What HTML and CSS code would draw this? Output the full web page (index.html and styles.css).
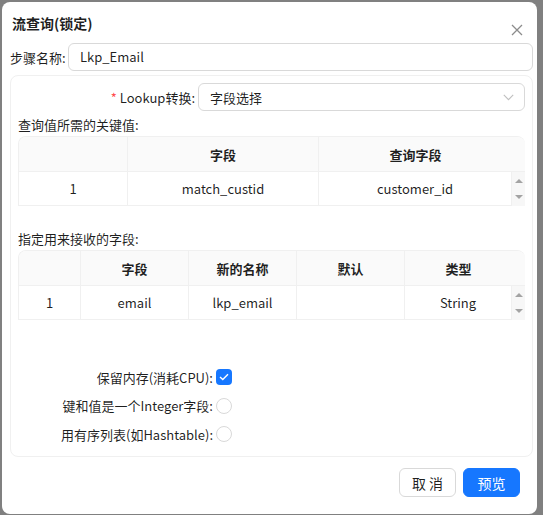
FILE: index.html
```html
<!DOCTYPE html>
<html lang="zh-CN">
<head>
<meta charset="utf-8">
<title>流查询(锁定)</title>
<link rel="stylesheet" href="styles.css">
</head>
<body>
<div class="modal">
  <div class="header">
    <div class="title">流查询(锁定)</div>
    <button class="close" aria-label="close">
      <svg width="12" height="12" viewBox="0 0 12 12"><path d="M1 1L11 11M11 1L1 11" stroke="#8c8c8c" stroke-width="1.3" fill="none"/></svg>
    </button>
  </div>
  <div class="name-row">
    <label class="name-label">步骤名称:</label>
    <div class="input">Lkp_Email</div>
  </div>
  <div class="card">
    <div class="form-row">
      <label class="lbl"><span class="req">*</span> Lookup转换:</label>
      <div class="select">
        <span>字段选择</span>
        <svg class="chev" width="11" height="7" viewBox="0 0 11 7"><path d="M0.8 0.8L5.5 5.6L10.2 0.8" stroke="#bfbfbf" stroke-width="1.1" fill="none"/></svg>
      </div>
    </div>
    <div class="section">查询值所需的关键值:</div>
    <div class="table t1">
      <div class="th"></div>
      <div class="th">字段</div>
      <div class="th last">查询字段</div>
      <div class="th scroll-h"></div>
      <div class="td">1</div>
      <div class="td">match_custid</div>
      <div class="td">customer_id</div>
      <div class="sb"><span class="up"></span><span class="down"></span></div>
    </div>
    <div class="section s2">指定用来接收的字段:</div>
    <div class="table t2">
      <div class="th"></div>
      <div class="th">字段</div>
      <div class="th">新的名称</div>
      <div class="th">默认</div>
      <div class="th last">类型</div>
      <div class="th scroll-h"></div>
      <div class="td">1</div>
      <div class="td">email</div>
      <div class="td">lkp_email</div>
      <div class="td"></div>
      <div class="td">String</div>
      <div class="sb"><span class="up"></span><span class="down"></span></div>
    </div>
    <div class="checks">
      <div class="ck-row">
        <span class="ck-label">保留内存(消耗CPU):</span>
        <span class="box checked"><svg width="10" height="8" viewBox="0 0 10 8"><path d="M1 4L3.8 6.6L9 1.2" stroke="#fff" stroke-width="1.4" fill="none"/></svg></span>
      </div>
      <div class="ck-row">
        <span class="ck-label">键和值是一个Integer字段:</span>
        <span class="box round"></span>
      </div>
      <div class="ck-row">
        <span class="ck-label">用有序列表(如Hashtable):</span>
        <span class="box round"></span>
      </div>
    </div>
  </div>
  <div class="footer">
    <button class="btn">取 消</button>
    <button class="btn primary">预览</button>
  </div>
</div>
</body>
</html>
```

FILE: styles.css
```css
* { box-sizing: border-box; }
html, body { margin: 0; }
body {
  width: 543px;
  height: 515px;
  background: #808080;
  padding: 2px 0 0 2px;
  font-family: "Noto Sans CJK SC", "Noto Sans", sans-serif;
  font-size: 13px;
  color: rgba(0, 0, 0, 0.88);
  overflow: hidden;
}
.modal {
  width: 535px;
  height: 512px;
  background: #fff;
  border-radius: 8px;
  padding: 0 4px 0 8px;
  display: flex;
  flex-direction: column;
}
.header {
  height: 41px;
  display: flex;
  justify-content: space-between;
  align-items: flex-start;
}
.title {
  margin-top: 10px;
  margin-left: 2px;
  font-size: 14px;
  font-weight: 700;
  line-height: 22px;
}
.close {
  margin-top: 21px;
  margin-right: 8px;
  width: 16px;
  height: 14px;
  padding: 0;
  border: 0;
  background: none;
  display: flex;
  align-items: center;
  justify-content: center;
}
.name-row {
  display: flex;
  align-items: center;
  height: 28px;
}
.name-label {
  width: 58px;
  padding-left: 0;
  white-space: nowrap;
}
.input {
  flex: 1;
  height: 28px;
  border: 1px solid #d9d9d9;
  border-radius: 6px;
  padding: 0 11px;
  line-height: 26px;
}
.card {
  margin-top: 4px;
  height: 382px;
  border: 1px solid #f0f0f0;
  border-radius: 8px;
  padding: 7px;
}
.form-row {
  display: flex;
  align-items: center;
  height: 28px;
}
.lbl {
  width: 180px;
  padding-right: 3px;
  text-align: right;
  white-space: nowrap;
}
.req { color: #ff4d4f; }
.select {
  flex: 1;
  height: 28px;
  border: 1px solid #d9d9d9;
  border-radius: 6px;
  padding: 0 10px 0 11px;
  display: flex;
  align-items: center;
  justify-content: space-between;
}
.section {
  margin-top: 3px;
  line-height: 22px;
}
.s2 { margin-top: 22px; }
.table {
  display: grid;
  border-top: 1px solid #f0f0f0;
  border-left: 1px solid #f0f0f0;
  border-radius: 8px 8px 0 0;
  overflow: hidden;
}
.t1 { grid-template-columns: 109px 191px 193px 14px; }
.t2 { grid-template-columns: 62px 108px 108px 108px 107px 14px; }
.th {
  height: 35px;
  background: #fafafa;
  font-weight: 700;
  display: flex;
  align-items: center;
  justify-content: center;
  border-right: 1px solid #f0f0f0;
  border-bottom: 1px solid #f0f0f0;
}
.th.last { border-right: 0; }
.th.scroll-h { border-right: 0; border-radius: 0 8px 0 0; }
.td {
  height: 34px;
  display: flex;
  align-items: center;
  justify-content: center;
  border-right: 1px solid #f0f0f0;
  border-bottom: 1px solid #f0f0f0;
}
.sb {
  height: 34px;
  background: #f7f7f7;
  position: relative;
}
.sb .up, .sb .down {
  position: absolute;
  left: 3px;
  width: 0;
  height: 0;
  border-left: 4px solid transparent;
  border-right: 4px solid transparent;
}
.sb .up { top: 7px; border-bottom: 4px solid #a3a3a3; }
.sb .down { top: 23px; border-top: 4px solid #a3a3a3; }
.checks {
  margin-top: 43px;
  display: flex;
  flex-direction: column;
}
.ck-row {
  height: 28.5px;
  display: flex;
  align-items: center;
}
.ck-label {
  width: 197px;
  text-align: right;
  padding-right: 2px;
  white-space: nowrap;
}
.box {
  width: 16px;
  height: 16px;
  margin-left: 1px;
  display: flex;
  align-items: center;
  justify-content: center;
}
.box.checked {
  background: #1677ff;
  border-radius: 4px;
}
.box.round {
  border: 1px solid #d9d9d9;
  border-radius: 50%;
}
.footer {
  margin-top: 11px;
  display: flex;
  justify-content: flex-end;
  gap: 7px;
  padding-right: 13px;
}
.btn {
  width: 57px;
  height: 29px;
  border: 1px solid #d9d9d9;
  border-radius: 6px;
  background: #fff;
  font-family: inherit;
  font-size: 14px;
  color: rgba(0, 0, 0, 0.88);
  padding: 0;
}
.btn.primary {
  background: #1677ff;
  border-color: #1677ff;
  color: #fff;
}
```
